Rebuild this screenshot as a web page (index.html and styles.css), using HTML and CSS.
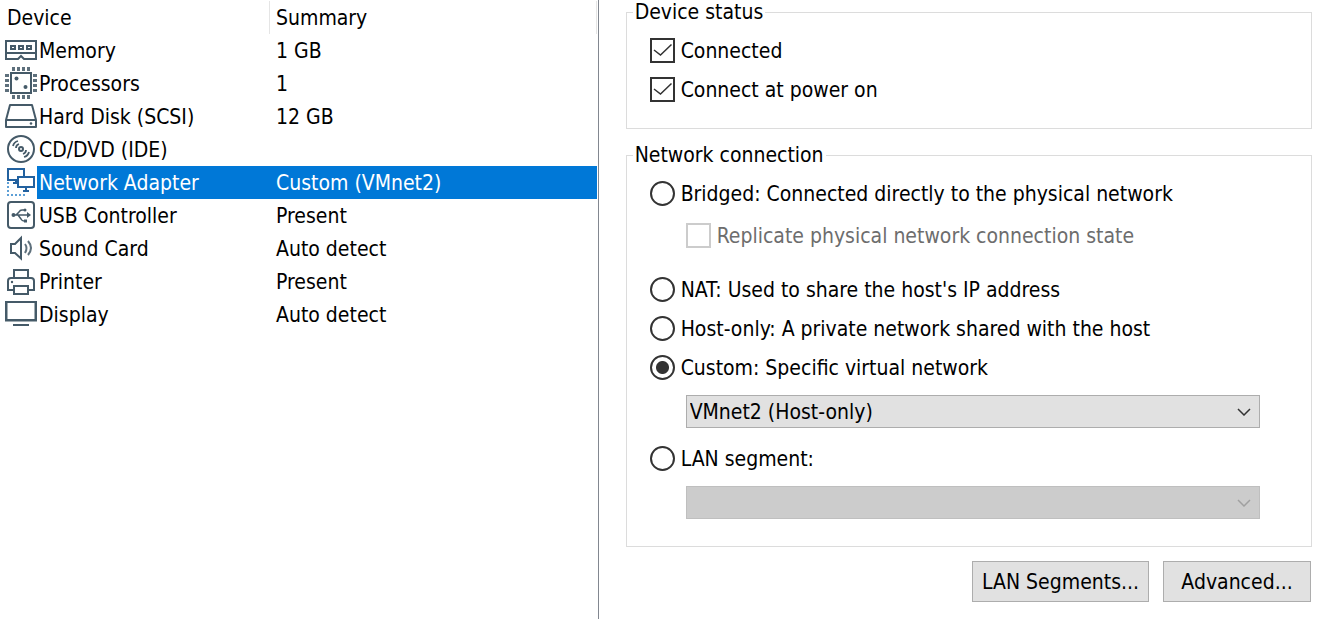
FILE: index.html
```html
<!DOCTYPE html>
<html lang="en">
<head>
<meta charset="utf-8">
<title>Virtual Machine Settings</title>
<link rel="stylesheet" href="styles.css">
</head>
<body>
<main class="settings">
  <section class="devices">
    <table class="device-table">
      <thead>
        <tr><th class="col-device" scope="col">Device</th><th scope="col">Summary</th></tr>
      </thead>
      <tbody>
        <tr>
          <td><div class="device"><svg class="icon" viewBox="0 0 37 33"><g fill="none" stroke="#455a68" stroke-width="2"><path d="M6 7h30v18H24l-3-3-3 3H6z"/><path d="M6 19h30"/><path d="M11 12h4v3h-4zM19 12h4v3h-4zM27 12h4v3h-4z"/></g></svg><span class="name">Memory</span></div></td>
          <td>1 GB</td>
        </tr>
        <tr>
          <td><div class="device"><svg class="icon" viewBox="0 0 37 33"><g fill="none" stroke="#455a68" stroke-width="2"><path d="M11 6h20v20H11z"/><path stroke="#5e707c" stroke-width="4" stroke-dasharray="3 2" d="M12 2h18M12 30h18M7 7v18M35 7v18"/></g><g fill="#455a68"><circle cx="16.500" cy="11.500" r="2"/><circle cx="25.500" cy="20" r="2"/></g></svg><span class="name">Processors</span></div></td>
          <td>1</td>
        </tr>
        <tr>
          <td><div class="device"><svg class="icon" viewBox="0 0 37 33"><g fill="none" stroke="#455a68" stroke-width="2" stroke-linejoin="round"><path d="M6 20v7h30v-7L32 5H10z"/><path d="M6 20h30"/></g><circle cx="31" cy="23.500" r="1.300" fill="#455a68"/></svg><span class="name">Hard Disk (SCSI)</span></div></td>
          <td>12 GB</td>
        </tr>
        <tr>
          <td><div class="device"><svg class="icon" viewBox="0 0 37 33"><g fill="none" stroke="#455a68" stroke-width="2"><circle cx="21" cy="16" r="13"/><circle cx="21" cy="16" r="2"/><path d="M13 13q1-4 5-5M16 15q0-3 3-4M29 19q-1 4-5 5M26 17q0 3-3 4" stroke-width="1.800"/></g></svg><span class="name">CD/DVD (IDE)</span></div></td>
          <td></td>
        </tr>
        <tr class="selected">
          <td><div class="device"><svg class="icon" viewBox="0 0 37 33"><g fill="none" stroke="#22619f" stroke-width="2"><path d="M17 14H8V3h16v7"/><path d="M18 11h16v10H18z"/><path d="M13 17h5M16 14v3M26 21v4M23 25h6"/></g><g fill="none" stroke="#5c9fd6" stroke-width="2" stroke-dasharray="2 2"><path d="M8 16v11"/><path d="M7 29h18"/></g></svg><span class="name">Network Adapter</span></div></td>
          <td>Custom (VMnet2)</td>
        </tr>
        <tr>
          <td><div class="device"><svg class="icon" viewBox="0 0 37 33"><rect x="8" y="3" width="26" height="26" rx="3" fill="none" stroke="#455a68" stroke-width="2"/><path d="M13 16h15M16 16l3-3q1-2 3-2h3M18 16l3 4q1 2 3 2h2" fill="none" stroke="#455a68" stroke-width="1.500"/><g fill="#455a68"><circle cx="13.500" cy="16" r="2"/><path d="M27 13l4 3-4 3z"/><circle cx="25" cy="11" r="1.500"/><path d="M24 20.500h3v3h-3z"/></g></svg><span class="name">USB Controller</span></div></td>
          <td>Present</td>
        </tr>
        <tr>
          <td><div class="device"><svg class="icon" viewBox="0 0 37 33"><g fill="none" stroke="#455a68" stroke-width="2"><path d="M11 12v9h4l6 5.500V6L15 12z"/><path d="M25 12q3 4 0 9M28 9q6 7 0 14" stroke="#5e707c"/></g></svg><span class="name">Sound Card</span></div></td>
          <td>Auto detect</td>
        </tr>
        <tr>
          <td><div class="device"><svg class="icon" viewBox="0 0 37 33"><g fill="none" stroke="#455a68" stroke-width="2"><path d="M14 13V5h14v8"/><path d="M14 25H8V16q0-3 3-3h20q3 0 3 3v9h-6"/><path d="M14 21h14v8H14z"/></g><circle cx="12" cy="17" r="1.200" fill="#455a68"/></svg><span class="name">Printer</span></div></td>
          <td>Present</td>
        </tr>
        <tr>
          <td><div class="device"><svg class="icon" viewBox="0 0 37 33"><path d="M6 4h30v18H6z" fill="none" stroke="#455a68" stroke-width="2"/><path d="M5 23.500h32M7.500 5v16M34.500 5v16" stroke="#a2adb3"/><path d="M13 27h16" stroke="#455a68" stroke-width="2"/></svg><span class="name">Display</span></div></td>
          <td>Auto detect</td>
        </tr>
      </tbody>
    </table>
  </section>

  <form class="details">
    <fieldset class="group">
      <legend>Device status</legend>
      <label class="option"><span class="tick"><input type="checkbox" checked><svg viewBox="0 0 25 25"><path d="M4 12l6.500 5L21.500 6.500"/></svg></span>Connected</label>
      <label class="option"><span class="tick"><input type="checkbox" checked><svg viewBox="0 0 25 25"><path d="M4 12l6.500 5L21.500 6.500"/></svg></span>Connect at power on</label>
    </fieldset>

    <fieldset class="group network">
      <legend>Network connection</legend>
      <div class="choice bridged">
        <label class="option"><input type="radio" name="net">Bridged: Connected directly to the physical network</label>
        <label class="option nested disabled"><input type="checkbox" disabled>Replicate physical network connection state</label>
      </div>
      <label class="option"><input type="radio" name="net">NAT: Used to share the host's IP address</label>
      <label class="option"><input type="radio" name="net">Host-only: A private network shared with the host</label>
      <div class="choice">
        <label class="option"><input type="radio" name="net" checked>Custom: Specific virtual network</label>
        <div class="combo nested">
          <select aria-label="Virtual network"><option>VMnet2 (Host-only)</option></select>
          <svg class="chevron" viewBox="0 0 14 8"><path d="M1 1l6 6 6-6"/></svg>
        </div>
      </div>
      <div class="choice">
        <label class="option"><input type="radio" name="net">LAN segment:</label>
        <div class="combo nested">
          <select aria-label="LAN segment" disabled><option></option></select>
          <svg class="chevron" viewBox="0 0 14 8"><path d="M1 1l6 6 6-6"/></svg>
        </div>
      </div>
    </fieldset>

    <div class="actions">
      <button type="button">LAN Segments...</button>
      <button type="button">Advanced...</button>
    </div>
  </form>
</main>
</body>
</html>
```
FILE: styles.css
```css
* { box-sizing: border-box; }

body {
  margin: 0;
  background: #fff;
  color: #000;
  font: 21px/24px Tahoma, "DejaVu Sans Condensed", "Noto Sans", sans-serif;
}

.settings {
  display: grid;
  grid-template-columns: 5fr 6fr;
  min-height: 100vh;
}

.devices {
  padding: 1px 1px 0 0;
  border-right: 1px solid #828790;
}

.device-table {
  width: 100%;
  table-layout: fixed;
  border-collapse: separate;
  border-spacing: 0;
}

th, td {
  height: 33px;
  padding: 0 0 0 6px;
  text-align: left;
  font-weight: normal;
  white-space: nowrap;
}

th { border-right: 1px solid #e5e5e5; }
.col-device { width: 270px; padding-left: 7px; }
td:first-child { padding: 0; }

.device { display: flex; }
.icon { flex: none; width: 37px; height: 33px; }

.name {
  flex: 1;
  padding: 5px 0 4px 2px;
}

.selected .name,
.selected td:last-child { background: #0078d7; color: #fff; }

.details { padding: 0 5px 16px 27px; }

.group {
  display: flex;
  flex-direction: column;
  gap: 14px;
  min-width: 0;
  margin: 0 0 14px;
  padding: 14px 51px 26px 23px;
  border: 1px solid #dcdcdc;
}

.network { padding-bottom: 27px; }

legend {
  margin-left: -17px;
  padding: 0 2px;
}

.choice {
  display: flex;
  flex-direction: column;
  gap: 15px;
  margin-bottom: 4px;
}

.bridged { gap: 17px; margin-bottom: 15px; }
.choice:last-child { margin-bottom: 0; }

.option {
  display: flex;
  align-items: center;
  gap: 6px;
  height: 25px;
  white-space: nowrap;
}

.nested { margin-left: 36px; }
.disabled { color: #6d6d6d; }

input {
  appearance: none;
  flex: none;
  width: 25px;
  height: 25px;
  margin: 0;
  border: 2px solid #333;
  background: #fff;
}

input:disabled { border-color: #ccc; }
input[type="radio"] { border-radius: 50%; }
input[type="radio"]:checked { background: radial-gradient(circle, #333 6px, #fff 7px); }

.tick { display: grid; }
.tick > * { grid-area: 1 / 1; }
.tick svg {
  width: 25px;
  height: 25px;
  fill: none;
  stroke: #333;
  stroke-width: 1.5;
  pointer-events: none;
}

.combo { position: relative; }

select {
  appearance: none;
  display: block;
  width: 100%;
  height: 33px;
  padding: 0 32px 0 3px;
  border: 1px solid #adadad;
  border-radius: 0;
  background: #e1e1e1;
  color: #000;
  font: inherit;
}

select:disabled { border-color: #bfbfbf; background: #ccc; opacity: 1; }

.chevron {
  position: absolute;
  top: 13px;
  right: 9px;
  width: 14px;
  height: 8px;
  fill: none;
  stroke: #333;
  stroke-width: 1.5;
  pointer-events: none;
}

select:disabled + .chevron { stroke: #a0a0a0; }

.actions {
  display: flex;
  justify-content: flex-end;
  gap: 14px;
  padding-right: 1px;
}

button {
  min-width: 148px;
  height: 41px;
  padding: 0 9px;
  border: 1px solid #adadad;
  border-radius: 0;
  background: #e1e1e1;
  color: #000;
  font: inherit;
}
```
